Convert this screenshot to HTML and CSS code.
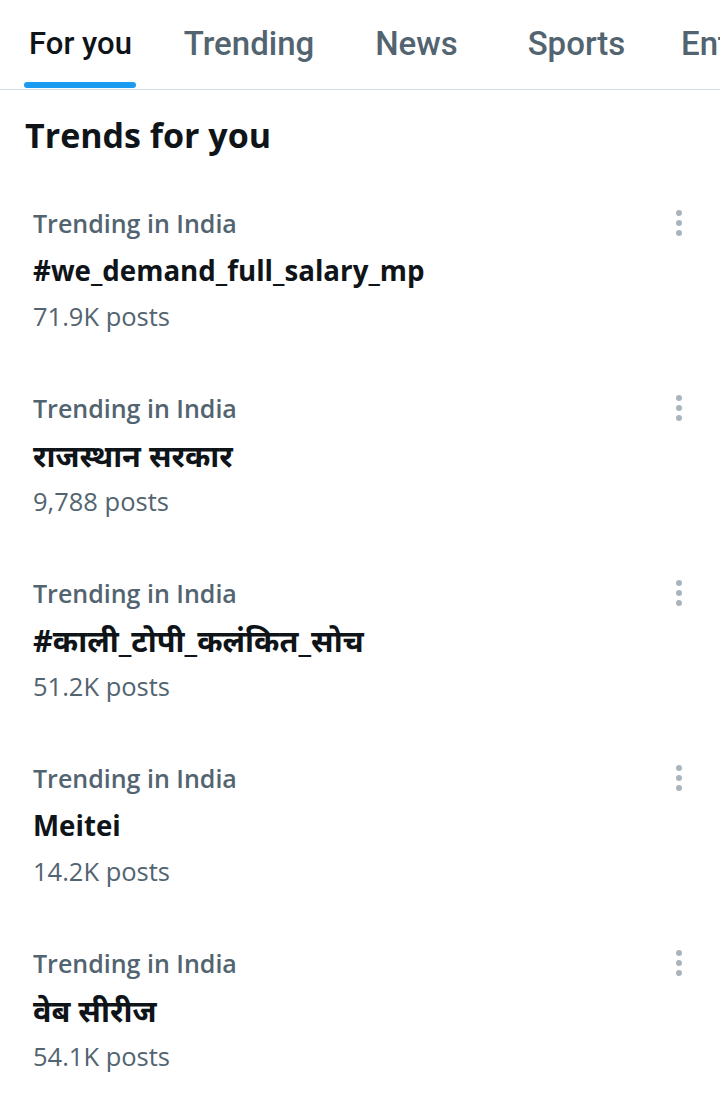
FILE: index.html
```html
<!DOCTYPE html>
<html>
<head>
<meta charset="utf-8">
<link rel="stylesheet" href="styles.css">
</head>
<body>
<nav class="tabs">
  <div class="tab"><span class="tab-label active">For you</span></div>
  <div class="tab"><span class="tab-label">Trending</span></div>
  <div class="tab"><span class="tab-label">News</span></div>
  <div class="tab"><span class="tab-label">Sports</span></div>
  <div class="tab tab-last"><span class="tab-label">Entertainment</span></div>
</nav>
<h2 class="heading">Trends for you</h2>
<ul class="trends">
  <li class="trend">
    <div class="trend-text">
      <div class="trend-meta">Trending in India</div>
      <div class="trend-title">#we_demand_full_salary_mp</div>
      <div class="trend-count">71.9K posts</div>
    </div>
    <div class="more"><span></span><span></span><span></span></div>
  </li>
  <li class="trend">
    <div class="trend-text">
      <div class="trend-meta">Trending in India</div>
      <div class="trend-title deva" lang="hi">राजस्थान सरकार</div>
      <div class="trend-count">9,788 posts</div>
    </div>
    <div class="more"><span></span><span></span><span></span></div>
  </li>
  <li class="trend">
    <div class="trend-text">
      <div class="trend-meta">Trending in India</div>
      <div class="trend-title deva" lang="hi">#काली_टोपी_कलंकित_सोच</div>
      <div class="trend-count">51.2K posts</div>
    </div>
    <div class="more"><span></span><span></span><span></span></div>
  </li>
  <li class="trend">
    <div class="trend-text">
      <div class="trend-meta">Trending in India</div>
      <div class="trend-title">Meitei</div>
      <div class="trend-count">14.2K posts</div>
    </div>
    <div class="more"><span></span><span></span><span></span></div>
  </li>
  <li class="trend">
    <div class="trend-text">
      <div class="trend-meta">Trending in India</div>
      <div class="trend-title deva" lang="hi">वेब सीरीज</div>
      <div class="trend-count">54.1K posts</div>
    </div>
    <div class="more"><span></span><span></span><span></span></div>
  </li>
</ul>
</body>
</html>
```
FILE: styles.css
```css
* { box-sizing: border-box; }
html, body { margin: 0; padding: 0; background: #ffffff; }
body {
  width: 720px;
  height: 1110px;
  overflow: hidden;
  font-family: "Open Sans", "Noto Sans", "Noto Sans Devanagari", sans-serif;
  color: #0f1419;
}
.tabs {
  display: grid;
  grid-template-columns: 161px 176px 159px 161px 1fr;
  height: 90px;
  border-bottom: 1px solid #d3dde2;
  overflow: hidden;
}
.tab {
  display: flex;
  justify-content: center;
  align-items: flex-start;
  padding-top: 22px;
  white-space: nowrap;
  overflow: hidden;
}
.tab-last { justify-content: flex-start; padding-left: 24px; }
.tab-label {
  position: relative;
  font-family: "Roboto", sans-serif;
  font-size: 33px;
  font-weight: 500;
  line-height: 44px;
  color: #536471;
}
.tab-label.active { color: #0f1419; font-size: 31px; }
.tab-label.active::after {
  content: "";
  position: absolute;
  left: -5px;
  right: -4px;
  top: 60px;
  height: 6px;
  border-radius: 3px;
  background: #1d9bf0;
}
.tab-last .tab-label { overflow: hidden; }
.heading {
  margin: 0;
  padding: 20px 25px 0;
  font-size: 34px;
  font-weight: 700;
  line-height: 50px;
  color: #0f1419;
}
.trends {
  list-style: none;
  margin: 0;
  padding: 0;
}
.trend {
  display: flex;
  justify-content: space-between;
  height: 185px;
  padding: 47px 38px 0 33px;
}
.trend-meta {
  font-size: 25px;
  font-weight: 600;
  line-height: 32px;
  color: #536471;
}
.trend-title {
  margin-top: 14px;
  font-size: 27.7px;
  font-weight: 700;
  line-height: 34px;
  color: #0f1419;
}
.trend-title.deva { font-size: 30.6px; }
.trend-count {
  margin-top: 13px;
  font-size: 25.5px;
  line-height: 32px;
  color: #536471;
}
.more {
  display: flex;
  flex-direction: column;
  gap: 4px;
  padding-top: 3px;
}
.more span {
  width: 6px;
  height: 6px;
  border-radius: 50%;
  background: #aab4bc;
}
```
